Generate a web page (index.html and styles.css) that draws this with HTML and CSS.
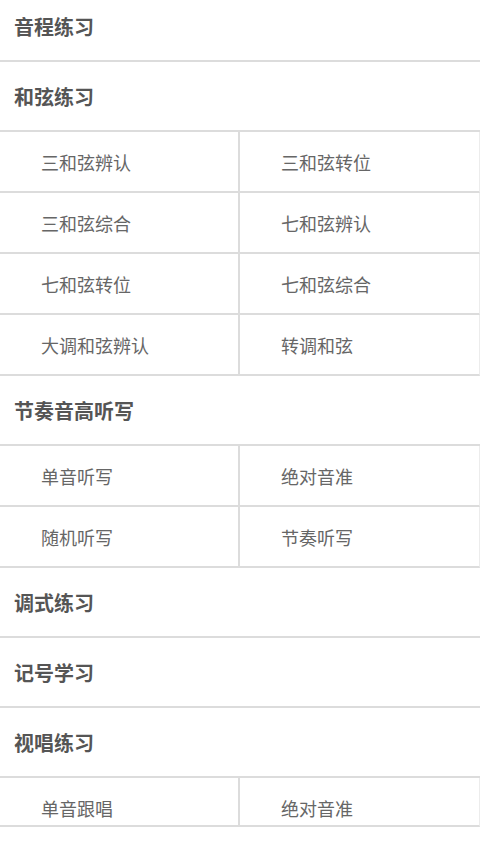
FILE: index.html
```html
<!DOCTYPE html>
<html>
<head>
    <meta charset="utf-8">
    <title>练习</title>
    <link rel="stylesheet" href="styles.css">
</head>
<body>
    <div class="lista">
        <div class="titulo">音程练习</div>

        <div class="titulo">和弦练习</div>
        <div class="rejilla">
            <div class="celda">三和弦辨认</div>
            <div class="celda">三和弦转位</div>
            <div class="celda">三和弦综合</div>
            <div class="celda">七和弦辨认</div>
            <div class="celda">七和弦转位</div>
            <div class="celda">七和弦综合</div>
            <div class="celda">大调和弦辨认</div>
            <div class="celda">转调和弦</div>
        </div>

        <div class="titulo">节奏音高听写</div>
        <div class="rejilla">
            <div class="celda">单音听写</div>
            <div class="celda">绝对音准</div>
            <div class="celda">随机听写</div>
            <div class="celda">节奏听写</div>
        </div>

        <div class="titulo">调式练习</div>
        <div class="titulo">记号学习</div>
        <div class="titulo">视唱练习</div>
        <div class="rejilla">
            <div class="celda corta">单音跟唱</div>
            <div class="celda corta">绝对音准</div>
        </div>
    </div>
</body>
</html>
```

FILE: styles.css
```css
body {
    margin: 0;
    background-color: #fff;
    font-family: "Noto Sans CJK SC", "Noto Sans", sans-serif;
}

.lista {
    margin-top: -8px;
}

.titulo {
    box-sizing: border-box;
    height: 70px;
    padding: 0 14px;
    display: flex;
    align-items: center;
    padding-top: 1px;
    font-size: 20px;
    font-weight: bold;
    color: #555;
    border-bottom: 2px solid #dcdcdc;
}

.rejilla {
    display: grid;
    grid-template-columns: 1fr 1fr;
}

.celda {
    box-sizing: border-box;
    height: 61px;
    display: flex;
    align-items: center;
    padding-left: 41px;
    padding-top: 1px;
    font-size: 18px;
    color: #666;
    border-bottom: 2px solid #dcdcdc;
}

.celda:nth-child(odd) {
    border-right: 2px solid #dcdcdc;
}

.celda:nth-child(even) {
    border-right: 1px solid #ececec;
}

/* la ultima fila queda cortada */
.celda.corta {
    height: 49px;
    align-items: flex-start;
    padding-top: 17px;
}
```
